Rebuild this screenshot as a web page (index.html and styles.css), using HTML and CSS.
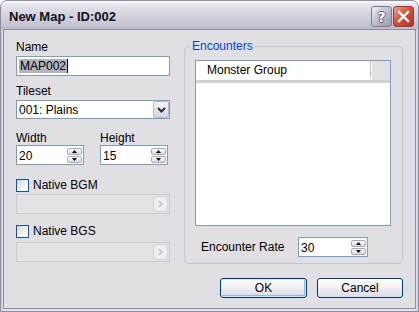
FILE: index.html
```html
<!DOCTYPE html>
<html lang="en">
<head>
    <meta charset="UTF-8">
    <title>New Map - ID:002</title>
    <link rel="stylesheet" href="styles.css">
</head>
<body>
    <div class="window">
        <div class="titlebar">
            <span class="title">New Map - ID:002</span>
            <div class="caption-btns">
                <span class="cap-btn help">?</span>
                <span class="cap-btn close">
                    <svg width="13" height="13" viewBox="0 0 13 13"><path d="M2 2 L11 11 M11 2 L2 11" stroke="#fff" stroke-width="2.4" stroke-linecap="square"/></svg>
                </span>
            </div>
        </div>

        <div class="client">
            <div class="left-col">
                <div class="label">Name</div>
                <div class="textbox"><span class="selected">MAP002</span><span class="caret"></span></div>

                <div class="label tileset-label">Tileset</div>
                <div class="combo">
                    <span class="combo-text">001: Plains</span>
                    <span class="combo-btn">
                        <svg width="9" height="6" viewBox="0 0 9 6"><path d="M1 1 L4.5 4.5 L8 1" fill="none" stroke="#2a2a3a" stroke-width="2"/></svg>
                    </span>
                </div>

                <div class="size-row">
                    <div class="size-field">
                        <div class="label size-label">Width</div>
                        <div class="spin">
                            <span class="spin-text">20</span>
                            <div class="spin-btns">
                                <span class="spin-btn"><svg width="7" height="4" viewBox="0 0 7 4"><path d="M0 4 L3.5 0 L7 4 Z" fill="#000"/></svg></span>
                                <span class="spin-btn"><svg width="7" height="4" viewBox="0 0 7 4"><path d="M0 0 L3.5 4 L7 0 Z" fill="#000"/></svg></span>
                            </div>
                        </div>
                    </div>
                    <div class="size-field">
                        <div class="label size-label">Height</div>
                        <div class="spin">
                            <span class="spin-text">15</span>
                            <div class="spin-btns">
                                <span class="spin-btn"><svg width="7" height="4" viewBox="0 0 7 4"><path d="M0 4 L3.5 0 L7 4 Z" fill="#000"/></svg></span>
                                <span class="spin-btn"><svg width="7" height="4" viewBox="0 0 7 4"><path d="M0 0 L3.5 4 L7 0 Z" fill="#000"/></svg></span>
                            </div>
                        </div>
                    </div>
                </div>

                <div class="check-row bgm">
                    <span class="checkbox"></span>
                    <span>Native BGM</span>
                </div>
                <div class="browse">
                    <span class="browse-btn"><svg width="5" height="8" viewBox="0 0 5 8"><path d="M1 1 L4 4 L1 7" fill="none" stroke="#c4c4c4" stroke-width="1.6"/></svg></span>
                </div>

                <div class="check-row bgs">
                    <span class="checkbox"></span>
                    <span>Native BGS</span>
                </div>
                <div class="browse bgs-field">
                    <span class="browse-btn"><svg width="5" height="8" viewBox="0 0 5 8"><path d="M1 1 L4 4 L1 7" fill="none" stroke="#c4c4c4" stroke-width="1.6"/></svg></span>
                </div>
            </div>

            <div class="group">
                <div class="group-title">Encounters</div>
                <div class="listview">
                    <div class="list-header">
                        <span class="col-head">Monster Group</span>
                        <span class="col-rest"></span>
                    </div>
                </div>
                <div class="rate-row">
                    <span class="rate-label">Encounter Rate</span>
                    <div class="spin rate-spin">
                        <span class="spin-text">30</span>
                        <div class="spin-btns">
                            <span class="spin-btn"><svg width="7" height="4" viewBox="0 0 7 4"><path d="M0 4 L3.5 0 L7 4 Z" fill="#000"/></svg></span>
                            <span class="spin-btn"><svg width="7" height="4" viewBox="0 0 7 4"><path d="M0 0 L3.5 4 L7 0 Z" fill="#000"/></svg></span>
                        </div>
                    </div>
                </div>
            </div>

            <div class="buttons">
                <span class="btn default">OK</span>
                <span class="btn">Cancel</span>
            </div>
        </div>
    </div>
</body>
</html>
```

FILE: styles.css
```css
/* Base */
body {
    margin: 0;
    font-family: "Liberation Sans", Arial, sans-serif;
    font-size: 12px;
    color: #000;
    background: #fff;
}

/* Window frame */
.window {
    width: 419px;
    height: 312px;
    box-sizing: border-box;
    border: 1px solid #8e8e9c;
    border-radius: 7px 7px 0 0;
    background: linear-gradient(to right, #c8c8d4, #e4e4ec 2px, #e4e4ec calc(100% - 2px), #c8c8d4);
    display: flex;
    flex-direction: column;
    overflow: hidden;
}

.titlebar {
    height: 28px;
    flex: none;
    display: flex;
    align-items: center;
    justify-content: space-between;
    padding: 0 4px 0 8px;
    background: linear-gradient(#fdfdfe 0, #e6e6ee 12%, #d6d6e0 45%, #cacad6 75%, #bdbdcb 100%);
}

.title {
    font-size: 13px;
    font-weight: bold;
    color: #101018;
    margin-top: 2px;
}

.caption-btns {
    display: flex;
    gap: 1px;
    margin-top: 3px;
}

.cap-btn {
    width: 21px;
    height: 21px;
    box-sizing: border-box;
    border-radius: 3px;
    display: flex;
    align-items: center;
    justify-content: center;
}

.cap-btn.help {
    border: 1px solid #7c7c90;
    background: linear-gradient(135deg, #f4f4f8, #c0c0d0 45%, #9898b0);
    color: #fff;
    font-family: "DejaVu Sans", sans-serif;
    font-weight: bold;
    font-size: 14px;
    text-shadow: -1px 0 0 #606070, 1px 0 0 #606070, 0 -1px 0 #606070, 0 1px 0 #606070;
}

.cap-btn.close {
    border: 1px solid #9a3a30;
    background: linear-gradient(135deg, #f0a090, #d8503c 45%, #b83020);
}

/* Client area */
.client {
    flex: 1;
    margin: 0 2px 2px;
    border: 1px solid #8c8c9c;
    background: #e0dfe3;
    display: grid;
    grid-template-columns: 154px 219px;
    grid-template-rows: auto auto;
    align-content: start;
    column-gap: 14px;
    row-gap: 14px;
    padding: 10px 12px 0;
}

.label {
    height: 14px;
    line-height: 14px;
    margin-bottom: 2px;
}

.tileset-label {
    margin-top: 8px;
}

/* Text box */
.textbox {
    height: 20px;
    box-sizing: border-box;
    border: 1px solid #7f9db9;
    background: #fff;
    display: flex;
    align-items: center;
    padding-left: 2px;
}

.selected {
    background: #b2b4bf;
    line-height: 14px;
    padding: 0 1px 0 1px;
}

.caret {
    width: 1px;
    height: 14px;
    background: #000;
}

/* Combo box */
.combo {
    height: 19px;
    box-sizing: border-box;
    border: 1px solid #7f9db9;
    background: #fff;
    display: flex;
    align-items: center;
    justify-content: space-between;
    padding: 0 0 0 2px;
}

.combo-btn {
    width: 16px;
    height: 17px;
    box-sizing: border-box;
    border: 1px solid #b6b8cc;
    border-radius: 2px;
    background: linear-gradient(#f2f2f8, #d4d6e4);
    display: flex;
    align-items: center;
    justify-content: center;
}

/* Width / height */
.size-row {
    display: flex;
    gap: 16px;
    margin-top: 12px;
}

.size-field {
    width: 68px;
}

.size-label {
    margin-bottom: 0;
}

.spin {
    height: 20px;
    box-sizing: border-box;
    border: 1px solid #7f9db9;
    background: #fff;
    display: flex;
    justify-content: space-between;
    padding: 2px 1px 1px 2px;
}

.spin-text {
    line-height: 16px;
}

.spin-btns {
    display: flex;
    flex-direction: column;
    gap: 1px;
}

.spin-btn {
    width: 15px;
    height: 7px;
    box-sizing: border-box;
    border: 1px solid #a8aac0;
    border-radius: 2px;
    background: linear-gradient(#ffffff, #d8d8e4);
    display: flex;
    align-items: center;
    justify-content: center;
}

.spin-btn svg {
    width: 5px;
    height: 3px;
}

/* Checkboxes */
.check-row {
    display: flex;
    align-items: center;
    gap: 4px;
    height: 14px;
}

.check-row.bgm {
    margin-top: 13px;
    margin-bottom: 2px;
}

.check-row.bgs {
    margin-top: 10px;
    margin-bottom: 4px;
}

.checkbox {
    width: 13px;
    height: 13px;
    box-sizing: border-box;
    border: 1px solid #1c5180;
    background: linear-gradient(135deg, #d4d4d8, #f4f4f4 60%, #fff);
}

/* Disabled browse fields */
.browse {
    height: 20px;
    box-sizing: border-box;
    border: 1px solid #c9c8cc;
    background: #e3e2e6;
    display: flex;
    justify-content: flex-end;
    align-items: center;
    padding-right: 1px;
}

.browse-btn {
    width: 15px;
    height: 16px;
    box-sizing: border-box;
    border: 1px solid #d2d2d8;
    border-radius: 2px;
    background: #eeeef2;
    display: flex;
    align-items: center;
    justify-content: center;
}

/* Group box */
.group {
    margin-top: 6px;
    border: 1px solid #c4c4cc;
    border-radius: 5px;
    padding: 0 11px 6px 10px;
    align-self: start;
}

.group-title {
    width: fit-content;
    line-height: 14px;
    margin: -8px 0 0 -5px;
    padding: 0 2px;
    background: #e0dfe3;
    color: #0046d5;
}

.listview {
    margin-top: 7px;
    height: 166px;
    box-sizing: border-box;
    border: 1px solid #7f9db9;
    background: #fff;
}

.list-header {
    display: flex;
    height: 22px;
    box-sizing: border-box;
    border-bottom: 3px solid #d0d0d8;
}

.col-head {
    width: 175px;
    box-sizing: border-box;
    padding-left: 11px;
    line-height: 18px;
    border-right: 1px solid #c0c0c8;
    margin-bottom: 2px;
}

.col-rest {
    flex: 1;
    background: #e2e2e6;
    margin-left: 1px;
}

.rate-row {
    display: flex;
    align-items: center;
    margin-top: 11px;
}

.rate-label {
    width: 103px;
    padding-left: 6px;
    box-sizing: border-box;
}

.rate-spin {
    width: 70px;
}

/* Dialog buttons */
.buttons {
    grid-column: 1 / 3;
    display: flex;
    justify-content: flex-end;
    gap: 10px;
}

.btn {
    width: 86px;
    height: 20px;
    box-sizing: border-box;
    border: 1px solid #003c74;
    border-radius: 3px;
    background: linear-gradient(#ffffff, #f2f2f4 40%, #dcdce4);
    display: flex;
    align-items: center;
    justify-content: center;
}

.btn.default {
    width: 87px;
    box-shadow: inset 0 0 0 1px #cee7ff, inset -1px -1px 0 1px #98b4e0;
}
```
